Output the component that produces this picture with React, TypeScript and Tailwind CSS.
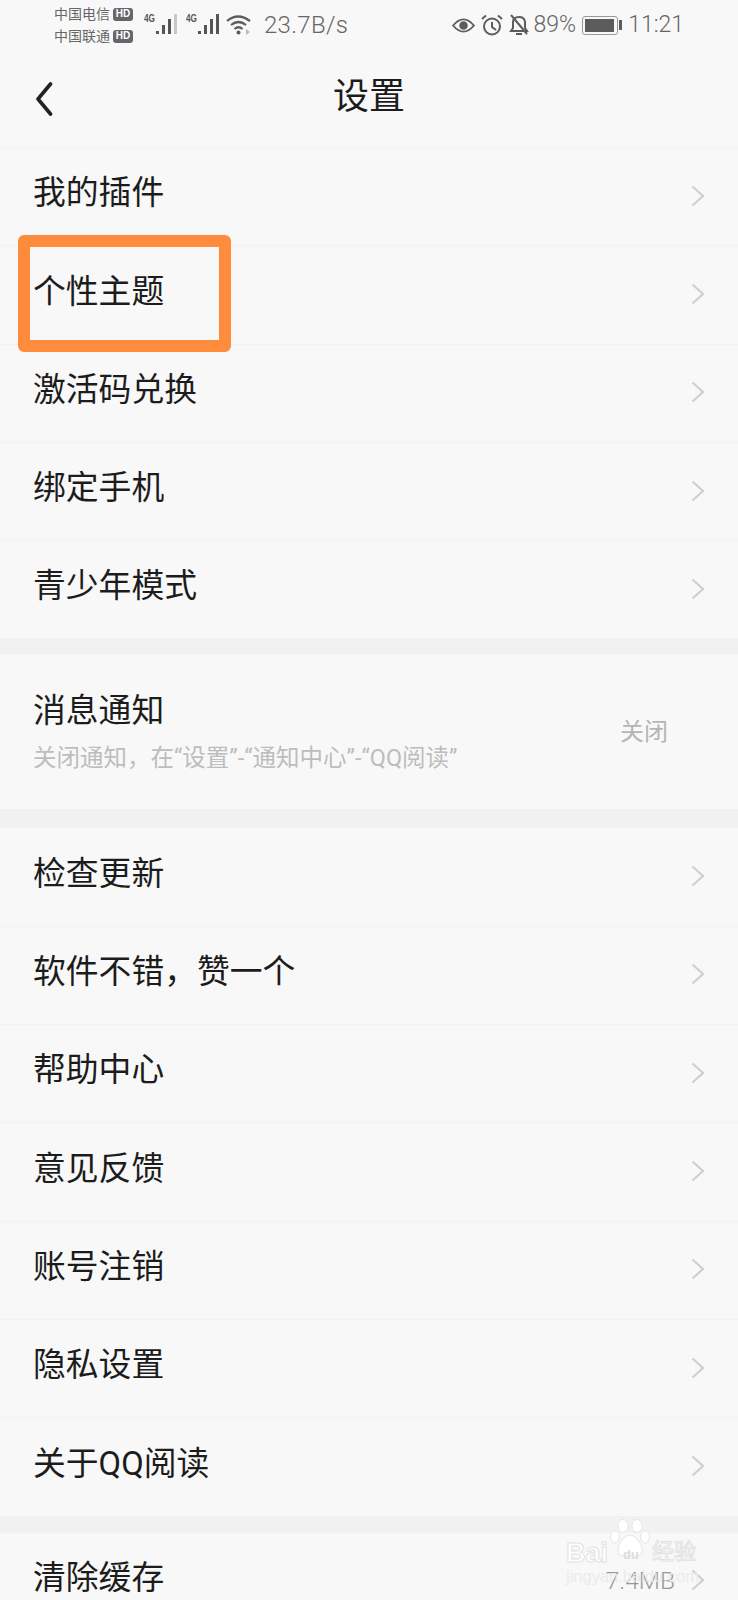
const group1 = ["我的插件", "个性主题", "激活码兑换", "绑定手机", "青少年模式"];
const group2 = ["检查更新", "软件不错，赞一个", "帮助中心", "意见反馈", "账号注销", "隐私设置", "关于QQ阅读"];

function Chevron() {
  return (
    <svg width="14" height="22" viewBox="0 0 14 22" fill="none" className="shrink-0 mb-[2px]">
      <path d="M1.5 1.5 L12 11 L1.5 20.5" stroke="#cfcfcf" strokeWidth="2.2" />
    </svg>
  );
}

function Signal({ dim }: { dim?: boolean }) {
  return (
    <div className="w-[34px] h-[30px] relative">
      <span className="absolute left-0 top-[3px] text-[11px] leading-[11px] font-bold text-[#555] font-['Liberation_Sans',sans-serif] scale-x-75 origin-left">4G</span>
      <svg width="23" height="21" viewBox="0 0 23 21" className="absolute left-[11px] top-[4px]">
        <rect x="1" y="17" width="3" height="3" fill="#555" />
        <rect x="7" y="11" width="3" height="9" fill="#555" />
        <rect x="13" y="5" width="3" height="15" fill="#555" />
        <rect x="19" y="0" width="3" height="20" fill={dim ? "#c8c8c8" : "#555"} />
      </svg>
    </div>
  );
}

function HdBadge() {
  return (
    <span className="ml-[3px] inline-flex items-center justify-center w-[20px] h-[13px] rounded-[3px] bg-[#666] text-white text-[10px] leading-none font-bold font-['Liberation_Sans',sans-serif]">
      HD
    </span>
  );
}

function StatusBar() {
  return (
    <div className="h-[55px] pl-[54px] pr-[54px] pt-[3px] flex items-start justify-between text-[#666]">
      <div className="flex items-center h-[44px]">
        <div className="flex flex-col w-[90px] text-[14px] leading-[22px] text-[#666]">
          <div className="flex items-center">中国电信<HdBadge /></div>
          <div className="flex items-center">中国联通<HdBadge /></div>
        </div>
        <Signal dim />
        <div className="w-[8px]" />
        <Signal />
        <svg width="26" height="22" viewBox="0 0 26 22" fill="none" className="ml-[6px] mr-[12px]">
          <path d="M1 7 Q12 -2 24 7" stroke="#5c5c5c" strokeWidth="2.2" />
          <path d="M5 11 Q12.5 5 20 11" stroke="#5c5c5c" strokeWidth="2.2" />
          <path d="M8.5 15 Q12.5 11.5 16.5 15" stroke="#5c5c5c" strokeWidth="2.2" />
          <circle cx="12.5" cy="18.5" r="2" fill="#5c5c5c" />
          <path d="M20 15 L24 18 L20 21 Z" fill="#bbb" />
        </svg>
        <span className="text-[24px] leading-[38px] font-['Roboto',sans-serif] font-light tracking-[0.3px]">23.7B/s</span>
      </div>
      <div className="flex items-center h-[44px]">
        <svg width="23" height="17" viewBox="0 0 24 18" fill="none" className="mr-[6px]">
          <path d="M1 9 Q12 -4 23 9 Q12 22 1 9 Z" stroke="#5c5c5c" strokeWidth="2" />
          <circle cx="12" cy="9" r="4.5" fill="#5c5c5c" />
        </svg>
        <svg width="22" height="22" viewBox="0 0 22 22" fill="none" className="mr-[6px]">
          <circle cx="11" cy="12.5" r="8" stroke="#5c5c5c" strokeWidth="2" />
          <path d="M11 8 V13 L15 16" stroke="#5c5c5c" strokeWidth="2" />
          <path d="M1 5 L5 1.5 M21 5 L17 1.5" stroke="#5c5c5c" strokeWidth="2" />
        </svg>
        <svg width="20" height="22" viewBox="0 0 20 22" fill="none" className="mr-[5px]">
          <path d="M4 8 Q4 3 10 3 Q15.5 3 16 8 V14 L18 17 H2 L4 14 Z" stroke="#5c5c5c" strokeWidth="2" />
          <path d="M2 1 L18 20" stroke="#5c5c5c" strokeWidth="2" />
          <path d="M7 20 H13" stroke="#5c5c5c" strokeWidth="2" />
        </svg>
        <span className="text-[23px] font-['Roboto',sans-serif] font-light mr-[6px]">89%</span>
        <div className="flex items-center mr-[6px]">
          <div className="w-[36px] h-[19px] rounded-[3px] border border-[#999] p-[2px]">
            <div className="w-[29px] h-full bg-[#5c5c5c]" />
          </div>
          <div className="w-[3px] h-[10px] bg-[#5c5c5c] ml-[1px]" />
        </div>
        <span className="text-[23px] font-['Roboto',sans-serif] font-light">11:21</span>
      </div>
    </div>
  );
}

function Row({ label, highlight, value }: { label: string; highlight?: boolean; value?: string }) {
  return (
    <div className="relative h-[98.3px] pl-[33px] pr-[33px] flex items-center justify-between border-t border-[#f2f2f2]">
      <span className="text-[32.8px] leading-none text-[#1c1c1c] mb-[6px]">{label}</span>
      <div className="flex items-center gap-[16px]">
        {value && <span className="text-[24.5px] text-[#999] font-light">{value}</span>}
        <Chevron />
      </div>
      {highlight && (
        <div className="absolute z-10 left-[18px] top-[-11px] w-[213px] h-[117px] border-[12px] border-[#ff8c3c] rounded-[6px]" />
      )}
    </div>
  );
}

function Watermark() {
  return (
    <div className="absolute z-10 left-[566px] top-[1518px] w-[132px] h-[66px] text-white">
      <svg width="42" height="42" viewBox="0 0 42 42" className="absolute left-[44px] top-0" fill="#fff" stroke="#e6e6e6" strokeWidth="1">
        <ellipse cx="13" cy="8" rx="5" ry="6.5" />
        <ellipse cx="27" cy="8" rx="5" ry="6.5" />
        <ellipse cx="5" cy="19" rx="4.5" ry="6" />
        <ellipse cx="35" cy="19" rx="4.5" ry="6" />
        <path d="M20 17 Q27 18 31 27 Q36 39 24 38 Q20 37 16 38 Q5 39 9 27 Q13 18 20 17 Z" />
      </svg>
      <span className="absolute left-0 top-[20px] text-[27px] leading-[30px] font-bold font-['Liberation_Sans',sans-serif] [-webkit-text-stroke:1px_#e2e2e2]">Bai</span>
      <span className="absolute left-[57px] top-[30px] text-[13px] leading-[14px] font-bold text-[#dcdcdc] font-['Liberation_Sans',sans-serif]">du</span>
      <span className="absolute left-[86px] top-[21px] text-[22px] leading-[26px] text-[#fbfbfb] [-webkit-text-stroke:1px_#e2e2e2]">经验</span>
      <span className="absolute left-0 top-[49px] text-[16.5px] leading-[18px] font-['Liberation_Sans',sans-serif] text-[#ebebeb]">jingyan.baidu.com</span>
    </div>
  );
}

export default function App() {
  return (
    <div className="relative w-[738px] h-[1600px] overflow-hidden bg-[#f8f8f8] font-['Roboto','Noto_Sans_CJK_SC',sans-serif]">
      <StatusBar />
      <div className="relative h-[92px] pb-[9px] flex items-center justify-center">
        <svg width="18" height="34" viewBox="0 0 18 34" fill="none" className="absolute left-[35px] top-[27px]">
          <path d="M15.5 2 L3 17 L15.5 32" stroke="#222" strokeWidth="3.6" strokeLinecap="round" strokeLinejoin="round" />
        </svg>
        <span className="text-[36px] leading-none text-[#1c1c1c]">设置</span>
      </div>
      {group1.map((label, i) => (
        <Row key={label} label={label} highlight={i === 1} />
      ))}
      <div className="h-[16px] bg-[#f1f1f1]" />
      <div className="h-[155px] pl-[33px] pr-[70px] flex items-center justify-between">
        <div className="flex flex-col">
          <span className="text-[32.8px] leading-[40px] text-[#1c1c1c]">消息通知</span>
          <span className="mt-[12px] text-[23.5px] leading-[30px] text-[#bdbdbd]">关闭通知，在“设置”-“通知中心”-“QQ阅读”</span>
        </div>
        <span className="text-[24px] text-[#b5b5b5]">关闭</span>
      </div>
      <div className="h-[18px] bg-[#f1f1f1]" />
      {group2.map((label) => (
        <Row key={label} label={label} />
      ))}
      <div className="h-[16px] bg-[#f1f1f1]" />
      <Row label="清除缓存" value="7.4MB" />
      <Watermark />
    </div>
  );
}
